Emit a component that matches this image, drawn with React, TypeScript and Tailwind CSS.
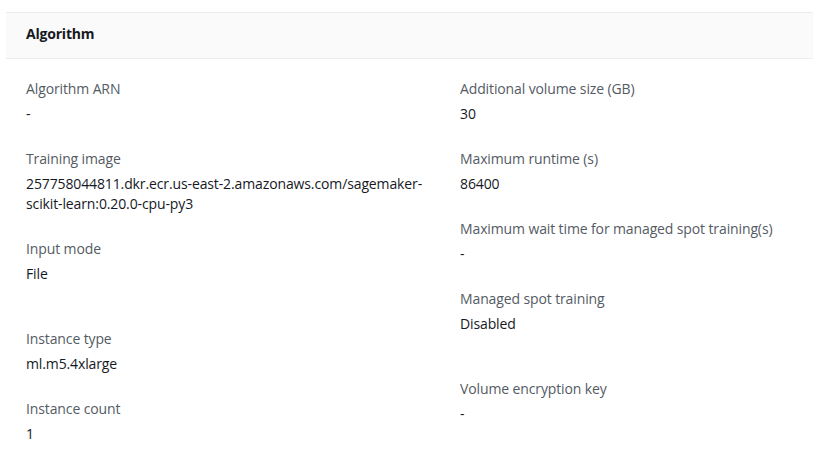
import React from "react";

type Item = { label: string; value: React.ReactNode; extra?: boolean };

const left: Item[] = [
  { label: "Algorithm ARN", value: "-" },
  {
    label: "Training image",
    value: (
      <>
        257758044811.dkr.ecr.us-east-2.amazonaws.com/sagemaker-
        <br />
        scikit-learn:0.20.0-cpu-py3
      </>
    ),
  },
  { label: "Input mode", value: "File", extra: true },
  { label: "Instance type", value: "ml.m5.4xlarge" },
  { label: "Instance count", value: "1" },
];

const right: Item[] = [
  { label: "Additional volume size (GB)", value: "30" },
  { label: "Maximum runtime (s)", value: "86400" },
  { label: "Maximum wait time for managed spot training(s)", value: "-" },
  { label: "Managed spot training", value: "Disabled", extra: true },
  { label: "Volume encryption key", value: "-" },
];

function Col({ items }: { items: Item[] }) {
  return (
    <div className="flex flex-col">
      {items.map((it) => (
        <div key={it.label} className={it.extra ? "mb-[45px]" : "mb-[25px]"}>
          <div className="text-[14px] leading-[20px] tracking-[-0.12px] text-[#545b64]">{it.label}</div>
          <div className="mt-[5px] text-[14px] leading-[20px] tracking-[-0.12px] text-[#16191f]">{it.value}</div>
        </div>
      ))}
    </div>
  );
}

export default function App() {
  return (
    <div className="min-h-[463px] bg-white pt-[12px] pl-[6px]" style={{ fontFamily: '"Open Sans", sans-serif' }}>
      <div className="w-[827px] bg-white">
        <div className="flex h-[47px] items-center border-y border-[#eaeded] bg-[#fafafa] px-[20px] pb-[5px]">
          <span className="text-[14px] font-bold tracking-[-0.2px] text-[#16191f]">Algorithm</span>
        </div>
        <div className="grid grid-cols-[434px_1fr] px-[20px] pt-[20px]">
          <Col items={left} />
          <Col items={right} />
        </div>
      </div>
    </div>
  );
}
